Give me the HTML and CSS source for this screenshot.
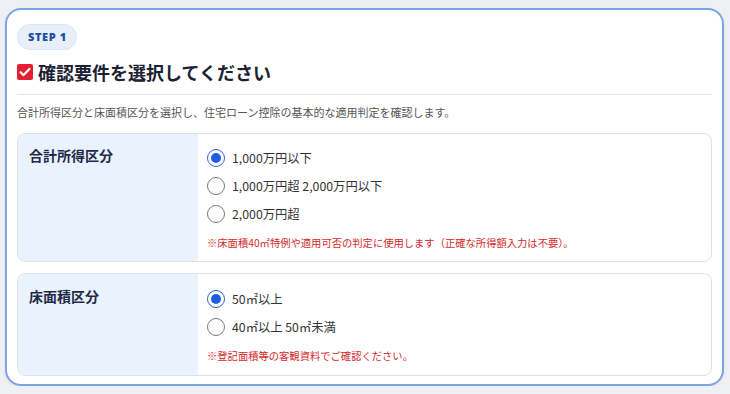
FILE: index.html
```html
<!DOCTYPE html>
<html lang="ja">
<head>
<meta charset="utf-8">
<link rel="stylesheet" href="styles.css">
</head>
<body>
<div class="card">
  <div class="step">STEP 1</div>
  <div class="title-row">
    <svg class="check" width="16" height="16" viewBox="0 0 16 16"><rect x="0" y="0" width="16" height="16" rx="2" fill="#e3202e"/><path d="M3.6 8.2 L6.6 11.1 L12.4 4.9" fill="none" stroke="#fff" stroke-width="2.2" stroke-linecap="round" stroke-linejoin="round"/></svg>
    <h1 class="title">確認要件を選択してください</h1>
  </div>
  <div class="divider"></div>
  <p class="desc">合計所得区分と床面積区分を選択し、住宅ローン控除の基本的な適用判定を確認します。</p>

  <div class="section">
    <div class="label">合計所得区分</div>
    <div class="options">
      <div class="opt"><span class="radio on"></span><span>1,000万円以下</span></div>
      <div class="opt"><span class="radio"></span><span>1,000万円超 2,000万円以下</span></div>
      <div class="opt"><span class="radio"></span><span>2,000万円超</span></div>
      <p class="note">※床面積40㎡特例や適用可否の判定に使用します（正確な所得額入力は不要）。</p>
    </div>
  </div>

  <div class="section second">
    <div class="label">床面積区分</div>
    <div class="options">
      <div class="opt"><span class="radio on"></span><span>50㎡以上</span></div>
      <div class="opt"><span class="radio"></span><span>40㎡以上 50㎡未満</span></div>
      <p class="note">※登記面積等の客観資料でご確認ください。</p>
    </div>
  </div>
</div>
</body>
</html>
```

FILE: styles.css
```css
html, body {
  margin: 0;
  padding: 0;
}
body {
  background: #eef0f4;
  font-family: "Noto Sans CJK JP", "Noto Sans", sans-serif;
  color: #333;
}
.card {
  box-sizing: border-box;
  margin: 8px 0 0 5px;
  width: 719px;
  height: 378px;
  border: 2px solid #7ea3e6;
  border-radius: 16px;
  background: #fff;
  padding: 12px 10px 9px 10px;
  box-shadow: 0 1px 3px rgba(0,0,0,0.08);
}
.step {
  display: inline-block;
  box-sizing: border-box;
  height: 26px;
  padding: 0 9px 0 10px;
  border-radius: 13px;
  background: #e8effb;
  border: 1px solid #dbe5f6;
  font-family: "Noto Sans", sans-serif;
  font-size: 11px;
  font-weight: 900;
  line-height: 24px;
  color: #1f4f9e;
  letter-spacing: 0.6px;
}
.title-row {
  display: flex;
  align-items: center;
  gap: 5px;
  height: 24px;
  margin-top: 10px;
}
.check {
  flex: none;
}
.title {
  margin: 0;
  font-size: 18px;
  font-weight: 700;
  line-height: 24px;
  color: #1b2233;
}
.divider {
  margin-top: 10px;
  border-top: 1px solid #e6e8ec;
}
.desc {
  margin: 9px 0 0 0;
  font-size: 11px;
  line-height: 16px;
  color: #555;
}
.section {
  display: flex;
  margin-top: 13px;
  border: 1px solid #dde2ea;
  border-radius: 8px;
  overflow: hidden;
}
.section.second {
  margin-top: 11px;
}
.label {
  box-sizing: border-box;
  width: 180px;
  flex: none;
  background: #eaf2fd;
  padding: 11px 0 0 11px;
  font-size: 14px;
  font-weight: 700;
  line-height: 20px;
  color: #1e2a48;
}
.second .label {
  padding-top: 12px;
}
.options {
  flex: 1;
  padding: 10px 9px 11px 9px;
}
.second .options {
  padding-top: 11px;
  padding-bottom: 12px;
}
.opt {
  display: flex;
  align-items: center;
  gap: 7px;
  height: 28px;
  font-size: 12.3px;
  color: #333;
}
.radio {
  box-sizing: border-box;
  width: 18px;
  height: 18px;
  border-radius: 50%;
  border: 1px solid #7a7a7a;
  background: #fff;
  flex: none;
  position: relative;
}
.radio.on {
  border: 1.5px solid #2e66d8;
}
.radio.on::after {
  content: "";
  position: absolute;
  left: 2.5px;
  top: 2.5px;
  width: 10px;
  height: 10px;
  border-radius: 50%;
  background: #1f5ee0;
}
.note {
  margin: 8px 0 0 0;
  font-size: 10.3px;
  line-height: 14px;
  color: #d42a2a;
}
```
